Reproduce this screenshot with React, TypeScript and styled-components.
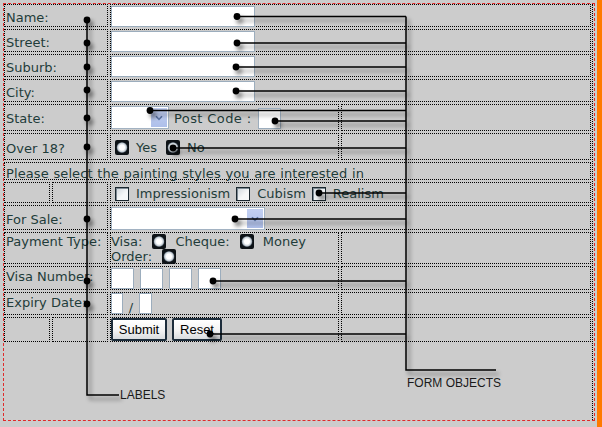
import React from 'react';
import styled, { createGlobalStyle } from 'styled-components';

const GlobalStyle = createGlobalStyle`
  html, body {
    margin: 0;
    padding: 0;
    background: #cccccc;
  }
  body {
    width: 602px;
    height: 427px;
    overflow: hidden;
    font-family: "DejaVu Sans", Verdana, sans-serif;
  }
`;

const Page = styled.div`
  position: relative;
  display: flex;
  width: 602px;
  height: 427px;
  background: #cccccc;
`;

const Canvas = styled.div`
  flex: 1;
  padding: 3px 2px 0 3px;
`;

const OrangeBar = styled.div`
  width: 5px;
  background: #ff7a00;
`;

const FormBox = styled.form`
  box-sizing: border-box;
  height: 418px;
  margin: 0;
  border: 1px dashed #e02a2a;
`;

const TableOutline = styled.div`
  box-sizing: border-box;
  width: 589px;
  height: 100%;
  border-right: 1px dotted #000;
`;

const FormGrid = styled.div`
  display: grid;
  grid-template-columns: 46px 56px 229px 250px;
  grid-template-rows: 23px 23px 23px 23px 27px 27px 18px 21px 25px 32px 24px 23px 25px;
  gap: 2px;
  width: 587px;
`;

// $shift nudges centred content up or down by that many pixels
const Cell = styled.div<{ $span?: number; $top?: boolean; $shift?: number }>`
  box-sizing: border-box;
  grid-column: span ${p => p.$span ?? 1};
  border: 1px dotted #000;
  display: flex;
  align-items: ${p => (p.$top ? 'flex-start' : 'center')};
  padding-top: ${p => (p.$top ? p.$shift ?? 0 : Math.max(0, (p.$shift ?? 0) * 2))}px;
  padding-bottom: ${p => (p.$top ? 0 : Math.max(0, -(p.$shift ?? 0) * 2))}px;
  min-width: 0;
  color: #1f3c3a;
  font-size: 13px;
  line-height: 15px;
  white-space: nowrap;
`;

const LabelCell = styled(Cell)`
  padding-left: 1px;
`;

const WideText = styled.span`
  letter-spacing: 0.1px;
  word-spacing: 0.4px;
`;

const FlowCell = styled(Cell)`
  display: block;
  white-space: normal;
`;

const TextInput = styled.input<{ $w: number }>`
  box-sizing: border-box;
  width: ${p => p.$w}px;
  height: 21px;
  margin: 0;
  padding: 0;
  border: 1px solid #9cadbd;
  background: #fff;
  flex: none;
`;

const SelectBox = styled.div<{ $w: number }>`
  box-sizing: border-box;
  width: ${p => p.$w}px;
  height: 23px;
  border: 1px solid #a2b2c2;
  background: #fff;
  display: flex;
  justify-content: flex-end;
  padding: 1px;
  flex: none;
`;

const SelectArrow = styled.div`
  width: 16px;
  background: linear-gradient(#c3d0f2, #aebfea);
  display: flex;
  align-items: center;
  justify-content: center;
`;

const PostLabel = styled.span`
  margin: 2px 6px 0 5px;
  letter-spacing: 0.4px;
`;

const PostInput = styled(TextInput)`
  margin-top: 2px;
`;

const ChoiceRow = styled.div<{ $gap: number }>`
  display: flex;
  align-items: center;
  gap: ${p => p.$gap}px;
  padding-left: 4px;
`;

const Choice = styled.span`
  display: inline-flex;
  align-items: center;
  gap: 7px;
`;

const CheckBox = styled.span`
  box-sizing: border-box;
  width: 14px;
  height: 14px;
  border: 1px solid #1b2830;
  background: linear-gradient(135deg, #cfd6dc, #f6f8f9 60%);
  box-shadow: inset 1px 1px 0 #7d8a94;
`;

const RadioMark = styled.svg<{ $inline?: boolean }>`
  flex: none;
  vertical-align: middle;
  margin: ${p => (p.$inline ? '-2px 5px 0 10px' : '0')};
`;

const BoxRow = styled.div`
  display: flex;
  align-items: center;
  gap: 6px;
`;

const ExpiryRow = styled.div`
  display: flex;
  align-items: flex-end;
`;

const Slash = styled.span`
  width: 16px;
  text-align: center;
  line-height: 13px;
`;

const ButtonRow = styled.div`
  display: flex;
  gap: 5px;
`;

const PushButton = styled.button<{ $w: number }>`
  box-sizing: border-box;
  width: ${p => p.$w}px;
  height: 23px;
  margin: 0;
  padding: 0;
  border: 2px solid #1d2d3b;
  border-radius: 2px;
  background: linear-gradient(#ffffff, #f3f3f3 55%, #d9dcdf);
  font-family: "Liberation Sans", Arial, sans-serif;
  font-size: 13px;
  color: #000;
`;

const Overlay = styled.svg`
  position: absolute;
  left: 0;
  top: 0;
  pointer-events: none;
`;

const Radio = ({ inline }: { inline?: boolean }) => (
  <RadioMark $inline={inline} width="14" height="15" viewBox="0 0 14 15">
    <rect width="14" height="15" rx="2" fill="#0d1216" />
    <circle cx="7" cy="7.5" r="5.6" fill="url(#radioGlow)" />
  </RadioMark>
);

const Select = ({ w }: { w: number }) => (
  <SelectBox $w={w}>
    <SelectArrow>
      <svg width="8" height="6" viewBox="0 0 8 6">
        <path d="M1 1.2 L4 4.4 L7 1.2" fill="none" stroke="#5b73a3" strokeWidth="1.6" />
      </svg>
    </SelectArrow>
  </SelectBox>
);

const labelDots = [20, 43, 67, 90, 118, 147, 219, 281, 304];
const fieldDots: [number, number][] = [
  [237, 16.5],
  [237, 43],
  [236, 67],
  [236, 91],
  [150, 110.5],
  [275, 121],
  [173, 148],
  [319, 193],
  [235, 219],
  [213, 281],
  [210, 334],
];

const Annotations = () => (
  <Overlay width="602" height="427" viewBox="0 0 602 427">
    <defs>
      <radialGradient id="radioGlow">
        <stop offset="0.45" stopColor="#ffffff" />
        <stop offset="0.78" stopColor="#c2ccd4" />
        <stop offset="1" stopColor="#26303a" />
      </radialGradient>
      <filter id="dropShadow" filterUnits="userSpaceOnUse" x="0" y="0" width="602" height="427">
        <feGaussianBlur in="SourceAlpha" stdDeviation="2" />
        <feOffset dx="3" dy="4" />
        <feComponentTransfer>
          <feFuncA type="linear" slope="0.5" />
        </feComponentTransfer>
        <feMerge>
          <feMergeNode />
          <feMergeNode in="SourceGraphic" />
        </feMerge>
      </filter>
    </defs>
    <g filter="url(#dropShadow)" stroke="#000" strokeWidth="1.5" fill="none">
      <path d="M87 18 V395 H119" />
      <path d="M406 16.5 V370 H496" />
      {fieldDots.map(([x, y]) => (
        <path key={`l${y}`} d={`M${x} ${y} H406`} />
      ))}
      <g fill="#000" stroke="none">
        {labelDots.map(y => (
          <circle key={`a${y}`} cx="87" cy={y} r="3.4" />
        ))}
        {fieldDots.map(([x, y]) => (
          <circle key={`b${y}`} cx={x} cy={y} r="3.4" />
        ))}
      </g>
    </g>
    <g fontFamily='"Liberation Sans", Arial, sans-serif' fontSize="12" fill="#1a1a1a">
      <text x="120" y="398.5">LABELS</text>
      <text x="407" y="387">FORM OBJECTS</text>
    </g>
  </Overlay>
);

export default function App() {
  return (
    <>
      <GlobalStyle />
      <Page>
        <Canvas>
          <FormBox onSubmit={e => e.preventDefault()}>
            <TableOutline>
              <FormGrid>
                <LabelCell $span={2} $shift={2}>Name:</LabelCell>
                <Cell $span={2} $shift={1}><TextInput $w={144} /></Cell>

                <LabelCell $span={2} $shift={2}>Street:</LabelCell>
                <Cell $span={2} $shift={1}><TextInput $w={144} /></Cell>

                <LabelCell $span={2} $shift={2}>Suburb:</LabelCell>
                <Cell $span={2} $shift={1}><TextInput $w={144} /></Cell>

                <LabelCell $span={2} $shift={2}>City:</LabelCell>
                <Cell $span={2} $shift={1}><TextInput $w={144} /></Cell>

                <LabelCell $span={2} $shift={1}>State:</LabelCell>
                <Cell>
                  <Select w={58} />
                  <PostLabel>Post Code :</PostLabel>
                  <PostInput $w={23} />
                </Cell>
                <Cell />

                <LabelCell $span={2} $shift={2}>Over 18?</LabelCell>
                <Cell $shift={1}>
                  <ChoiceRow $gap={9}>
                    <Choice><Radio />Yes</Choice>
                    <Choice><Radio />No</Choice>
                  </ChoiceRow>
                </Cell>
                <Cell />

                <LabelCell $span={4} $shift={2}>
                  <WideText>Please select the painting styles you are interested in</WideText>
                </LabelCell>

                <Cell />
                <Cell />
                <Cell $span={2} $shift={1}>
                  <ChoiceRow $gap={6}>
                    <Choice><CheckBox />Impressionism</Choice>
                    <Choice><CheckBox />Cubism</Choice>
                    <Choice><CheckBox />Realism</Choice>
                  </ChoiceRow>
                </Cell>

                <LabelCell $span={2} $shift={2}>For Sale:</LabelCell>
                <Cell $span={2} $shift={1}><Select w={154} /></Cell>

                <LabelCell $span={2} $top $shift={1}>Payment Type:</LabelCell>
                <FlowCell $top $shift={1}>
                  Visa:<Radio inline /> Cheque:<Radio inline /> Money Order:<Radio inline />
                </FlowCell>
                <Cell />

                <LabelCell $span={2} $shift={-2}>Visa Number:</LabelCell>
                <Cell>
                  <BoxRow>
                    <TextInput $w={23} />
                    <TextInput $w={23} />
                    <TextInput $w={23} />
                    <TextInput $w={23} />
                  </BoxRow>
                </Cell>
                <Cell />

                <LabelCell $span={2} $shift={-1}>Expiry Date:</LabelCell>
                <Cell>
                  <ExpiryRow>
                    <TextInput $w={12} />
                    <Slash>/</Slash>
                    <TextInput $w={13} />
                  </ExpiryRow>
                </Cell>
                <Cell />

                <Cell />
                <Cell />
                <Cell>
                  <ButtonRow>
                    <PushButton type="submit" $w={56}>Submit</PushButton>
                    <PushButton type="reset" $w={50}>Reset</PushButton>
                  </ButtonRow>
                </Cell>
                <Cell />
              </FormGrid>
            </TableOutline>
          </FormBox>
        </Canvas>
        <OrangeBar />
        <Annotations />
      </Page>
    </>
  );
}
